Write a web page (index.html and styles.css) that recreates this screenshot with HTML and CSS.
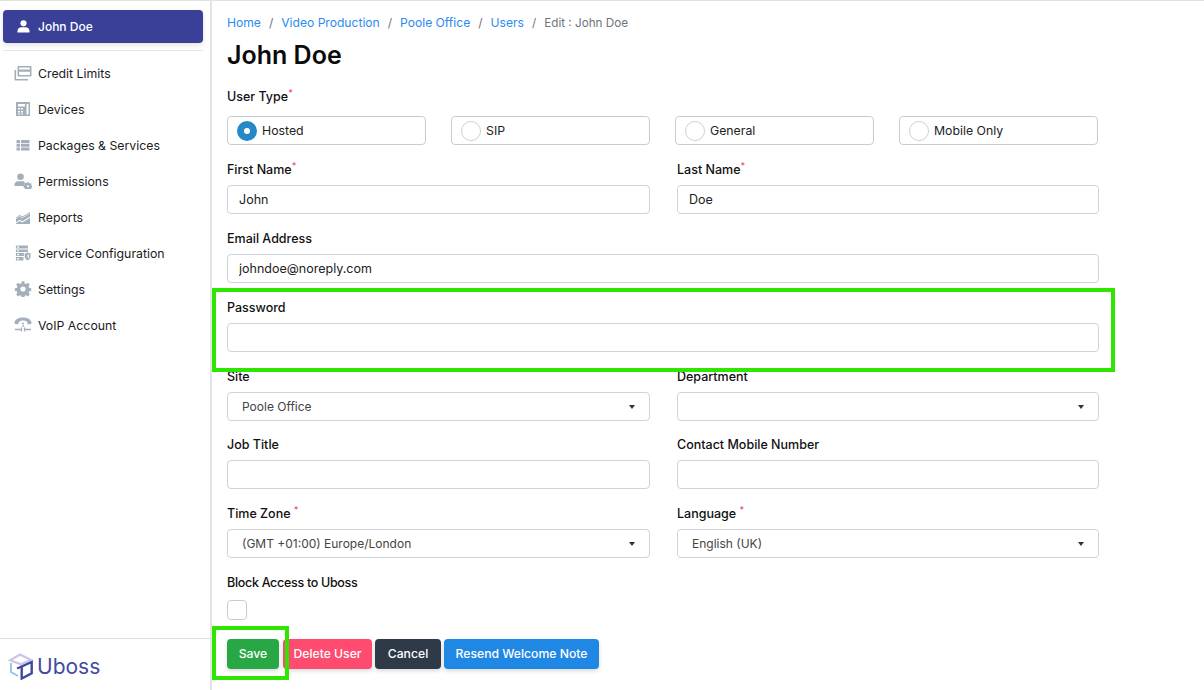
FILE: index.html
```html
<!DOCTYPE html>
<html lang="en">
<head>
    <meta charset="UTF-8">
    <meta name="viewport" content="width=device-width, initial-scale=1.0">
    <title>Edit User</title>
    <link rel="stylesheet" href="styles.css">
</head>
<body>

    <div class="app">
        <aside class="sidebar">
            <a class="user-link">
                <svg class="user-icon" viewBox="0 0 14 14"><circle cx="7" cy="3.6" r="3.3"/><path d="M0.5 13.5v-1.6c0-2.4 2-4 4.2-4h4.6c2.2 0 4.2 1.6 4.2 4v1.6z"/></svg>
                John Doe
            </a>
            <nav class="menu">
                <a class="menu-item">
                    <svg viewBox="0 0 18 16"><path fill-rule="evenodd" d="M4.500 1h12a1 1 0 0 1 1 1v8.500a1 1 0 0 1-1 1h-12a1 1 0 0 1-1-1V2a1 1 0 0 1 1-1zm.6 3.400h10.800V2.500H5.100zm0 2.400v3.200h10.800V6.800z"/><path d="M0.500 5v9.500a1 1 0 0 0 1 1H14v-1.600H2.100V5z"/></svg>
                    Credit Limits
                </a>
                <a class="menu-item">
                    <svg viewBox="0 0 18 16"><path fill-rule="evenodd" d="M2.500 1h13a.5.5 0 0 1 .5.500v13a.5.5 0 0 1-.5.500h-13a.5.5 0 0 1-.5-.5v-13a.5.5 0 0 1 .5-.5zM4 3v2.500h7V3zm0 4v1.500h2V7zm3 0v1.500h2V7zM4 10v1.500h2V10zm3 0v1.500h2V10zm-3 2.500v1h2v-1zm3 0v1h2v-1zM12.500 3v10.500h2V3z"/></svg>
                    Devices
                </a>
                <a class="menu-item">
                    <svg viewBox="0 0 18 16"><path d="M2.500 3h3.500v3H2.500zm4.500 0h8.500v3H7zM2.500 6.700h3.500v3H2.500zm4.500 0h8.500v3H7zM2.500 10.400h3.500v3H2.500zm4.500 0h8.500v3H7z"/></svg>
                    Packages &amp; Services
                </a>
                <a class="menu-item">
                    <svg viewBox="0 0 18 16"><circle cx="6.500" cy="3.700" r="3.300"/><path d="M0.500 13v-1.500c0-2 1.700-3.300 3.500-3.300h5c.6 0 1.100.1 1.600.3V13z"/><path fill-rule="evenodd" d="M13.200 9h1.600l.3 1 .9.400 1-.5 1 1-.5 1 .4.900 1 .3v1.600l-1 .3-.4.900.5 1-1 1-1-.5-.9.400-.3 1h-1.600l-.3-1-.9-.4-1 .5-1-1 .5-1-.4-.9-1-.3V12.600l1-.3.4-.9-.5-1 1-1 1 .5.900-.4zM14 12.200a1.200 1.200 0 1 0 0 2.400 1.200 1.200 0 0 0 0-2.400z" transform="translate(1.400 1.200) scale(.9)"/></svg>
                    Permissions
                </a>
                <a class="menu-item">
                    <svg viewBox="0 0 18 16"><path d="M2 10l3.500-2.600 3 1.500L16 4.500v3l-7.500 4.700-3-1.500L2 13.500V15h14V8.800l-7.500 4.700-3-1.500L2 14.500z"/><path d="M2 8.800l3.500-2.700 3 1.500L16 3v.9L8.500 8.500l-3-1.500L2 9.700z"/></svg>
                    Reports
                </a>
                <a class="menu-item">
                    <svg viewBox="0 0 18 18"><path d="M1 0.500h13.500v3.500H1zM1 5h13.500v3H1zM1 9h9v3.500H1zM1 13.500h8.500v4H1z"/><path d="M14.200 8.500l3.300 1.200v3c0 2.200-1.400 3.800-3.300 4.800-1.900-1-3.300-2.600-3.300-4.800v-3z"/><path fill="#fff" d="M14.200 10.500l1.500.6v1.700c0 1-.6 1.700-1.500 2.100z"/><path fill="#fff" d="M2.500 1.500h2V3h-2zM2.500 5.800h2V7h-2zM2.500 10h2v1.500h-2zM2.500 14.700h2v1.500h-2z"/></svg>
                    Service Configuration
                </a>
                <a class="menu-item">
                    <svg viewBox="0 0 18 16"><path fill-rule="evenodd" transform="translate(1 0)" d="M6.700.2h2.600l.4 2.200 1.300.6 1.900-1.200 1.900 1.900-1.200 1.900.6 1.300 2 .4v2.600l-2 .4-.6 1.300 1.200 1.900-1.900 1.900-1.900-1.200-1.300.6-.4 2.200H6.700l-.4-2.200-1.300-.6-1.900 1.200-1.900-1.900 1.200-1.900-.6-1.300-2-.4V7.300l2-.4.6-1.300L1.200 3.700l1.900-1.900L5 3l1.300-.6zM8 5.400a2.600 2.600 0 1 0 0 5.200 2.600 2.600 0 0 0 0-5.200z"/></svg>
                    Settings
                </a>
                <a class="menu-item">
                    <svg viewBox="0 0 20 18"><path d="M0.500 6C1.200 2.500 5 .500 10 .500s8.800 2 9.500 5.500v1.500l-4 .8-1-3C13.200 4.500 11.700 4 10 4s-3.200.5-4.500 1.300l-1 3-4-.8z"/><path d="M8.800 6.500h2.400v1.700H8.800zm.4 2.400h1.700v2H9.200z"/><path d="M1 13.300h6.500v-1.500H9v4.400H7.500v-1.300H1zm11.500-1.500H11v4.400h1.500v-1.300H19v-1.600h-6.500z"/></svg>
                    VoIP Account
                </a>
            </nav>
            <div class="sidebar-foot">
                <svg class="logo-icon" viewBox="0 0 26 27">
                    <path fill="none" stroke="#c9c6e6" stroke-width="2.200" d="M12 1.500l11 5.500-10 4.300L2 7.300z"/>
                    <path fill="none" stroke="#8fc4e6" stroke-width="1.800" d="M3 10v9l7 4"/>
                    <path fill="none" stroke="#3f4a9c" stroke-width="2.400" d="M13.700 13.500l10-4.500v11.200l-10 5.300z"/>
                    <path fill="none" stroke="#3f4a9c" stroke-width="2" d="M9 15.500l4.700-2"/>
                </svg>
                <span class="logo-text">Uboss</span>
            </div>
        </aside>

        <main class="content">
            <ol class="breadcrumb">
                <li><a>Home</a></li>
                <li><a>Video Production</a></li>
                <li><a>Poole Office</a></li>
                <li><a>Users</a></li>
                <li class="current">Edit : John Doe</li>
            </ol>
            <h1 class="title">John Doe</h1>

            <form class="user-form">
                <div class="field">
                    <label>User Type<sup>*</sup></label>
                    <div class="radio-row">
                        <div class="radio-box"><span class="radio checked"></span>Hosted</div>
                        <div class="radio-box"><span class="radio"></span>SIP</div>
                        <div class="radio-box"><span class="radio"></span>General</div>
                        <div class="radio-box"><span class="radio"></span>Mobile Only</div>
                    </div>
                </div>

                <div class="two-col">
                    <div class="field">
                        <label>First Name<sup>*</sup></label>
                        <input class="input" type="text" value="John">
                    </div>
                    <div class="field">
                        <label>Last Name<sup>*</sup></label>
                        <input class="input" type="text" value="Doe">
                    </div>
                </div>

                <div class="field">
                    <label>Email Address</label>
                    <input class="input" type="text" value="johndoe@noreply.com">
                </div>

                <div class="field">
                    <label>Password</label>
                    <input class="input" type="password">
                </div>

                <div class="two-col">
                    <div class="field">
                        <label>Site</label>
                        <div class="select">Poole Office</div>
                    </div>
                    <div class="field">
                        <label>Department</label>
                        <div class="select"></div>
                    </div>
                </div>

                <div class="two-col">
                    <div class="field">
                        <label>Job Title</label>
                        <input class="input" type="text">
                    </div>
                    <div class="field">
                        <label>Contact Mobile Number</label>
                        <input class="input" type="text">
                    </div>
                </div>

                <div class="two-col">
                    <div class="field">
                        <label>Time Zone <sup>*</sup></label>
                        <div class="select">(GMT +01:00) Europe/London</div>
                    </div>
                    <div class="field">
                        <label>Language <sup>*</sup></label>
                        <div class="select">English (UK)</div>
                    </div>
                </div>

                <div class="field">
                    <label class="block-label">Block Access to Uboss</label>
                    <span class="checkbox"></span>
                </div>

                <div class="actions">
                    <button type="button" class="btn btn-save">Save</button>
                    <button type="button" class="btn btn-delete">Delete User</button>
                    <button type="button" class="btn btn-cancel">Cancel</button>
                    <button type="button" class="btn btn-resend">Resend Welcome Note</button>
                </div>
            </form>
        </main>
    </div>

    <!-- green annotation boxes drawn over the form -->
    <div class="mark mark-password"></div>
    <div class="mark mark-save"></div>

</body>
</html>
```

FILE: styles.css
```css
* {
    box-sizing: border-box;
}
html, body {
    height: 100%;
}
body {
    margin: 0;
    font-family: Inter, "Liberation Sans", sans-serif;
    font-size: 12.3px;
    color: #111;
    background-color: #fff;
    overflow: hidden;
}
.app {
    display: flex;
    height: 690px;
    border-top: 1px solid #e2e2e2;
}

/* sidebar */
.sidebar {
    width: 212px;
    flex-shrink: 0;
    display: flex;
    flex-direction: column;
    padding-top: 9px;
    border-right: 2px solid #e4e4e4;
}
.user-link {
    display: flex;
    align-items: center;
    gap: 8px;
    height: 33px;
    margin: 0 7px 0 3px;
    padding: 0 0 1px 14px;
    color: #fff;
    font-size: 12px;
    font-weight: 500;
    background-color: #3a3f97;
    border-radius: 4px;
    box-shadow: 0 2px 5px rgba(0, 0, 0, 0.12);
}
.user-icon {
    width: 13px;
    height: 13px;
    fill: #fff;
}
.menu {
    display: flex;
    flex-direction: column;
    margin: 7px 7px 0 3px;
    padding-top: 4px;
    border-top: 1px solid #e4e4e4;
}
.menu-item {
    display: flex;
    align-items: center;
    height: 36px;
    padding-left: 11px;
    gap: 6px;
    color: #1c1c1c;
}
.menu-item svg {
    width: 18px;
    height: 16px;
    fill: #a3afba;
    flex-shrink: 0;
}
.sidebar-foot {
    display: flex;
    align-items: center;
    gap: 3px;
    margin-top: auto;
    height: 52px;
    padding: 4px 0 0 8px;
    border-top: 1px solid #dedede;
}
.logo-icon {
    width: 26px;
    height: 27px;
}
.logo-text {
    font-size: 21px;
    color: #414b9e;
}

/* main */
.content {
    flex: 1;
    padding: 0 105px 0 15px;
}
.breadcrumb {
    display: flex;
    list-style: none;
    margin: 0;
    padding: 14px 0 0;
    font-size: 12.1px;
    line-height: 16px;
}
.breadcrumb li + li::before {
    content: "/";
    margin: 0 8px;
    color: #6c757d;
}
.breadcrumb a {
    color: #2a8bf2;
}
.breadcrumb .current {
    color: #6c757d;
    font-size: 11.7px;
}
.title {
    margin: 8px 0 0;
    font-size: 25px;
    line-height: 32px;
    font-weight: 600;
    color: #0a0a0a;
}
.user-form {
    display: flex;
    flex-direction: column;
    padding-top: 18px;
    gap: 16.75px;
}
.field {
    display: flex;
    flex-direction: column;
    min-width: 0;
}
.field label {
    height: 16px;
    line-height: 16px;
    margin-bottom: 7px;
    font-size: 12.5px;
    font-weight: 500;
}
.field .block-label {
    letter-spacing: -0.3px;
}
.field sup {
    color: #f0476f;
    font-size: 9px;
    line-height: 0;
}
.two-col {
    display: grid;
    grid-template-columns: 423px 422px;
    gap: 27px;
}
.radio-row {
    display: grid;
    grid-template-columns: repeat(4, 1fr);
    gap: 25.5px;
    width: 870.5px;
    margin-top: 4px;
    margin-bottom: 0.5px;
}
.radio-box {
    display: flex;
    align-items: center;
    gap: 5px;
    height: 29px;
    padding-left: 9px;
    border: 1px solid #c8ccd2;
    border-radius: 4px;
    color: #222;
}
.radio {
    width: 20px;
    height: 20px;
    border: 1px solid #cfcfcf;
    border-radius: 50%;
}
.radio.checked {
    border: 7px solid #2589c8;
}
.input, .select {
    height: 29px;
    width: 100%;
    border: 1px solid #ced4da;
    border-radius: 4px;
    background-color: #fff;
    color: #222;
    font-family: inherit;
    font-size: 12.5px;
}
.input {
    padding: 0 11px;
    outline: none;
}
.select {
    position: relative;
    display: flex;
    align-items: center;
    padding-left: 14px;
    color: #444;
    font-size: 12px;
}
.select::after {
    content: "";
    position: absolute;
    right: 14px;
    top: 12px;
    border-left: 3.5px solid transparent;
    border-right: 3.5px solid transparent;
    border-top: 4px solid #333;
}
.checkbox {
    display: block;
    width: 20px;
    height: 20px;
    margin-top: 2px;
    border: 1px solid #c8ccd2;
    border-radius: 4px;
}
.actions {
    display: flex;
    gap: 3px;
    margin-top: 2.5px;
}
.btn {
    height: 30px;
    padding: 0 0 2px;
    border: none;
    border-radius: 4px;
    color: #fff;
    font-family: inherit;
    font-size: 12.2px;
    font-weight: 500;
    box-shadow: 0 2px 4px rgba(0, 0, 0, 0.15);
}
.btn-save {
    width: 52px;
    margin-right: 1px;
    background-color: #28a745;
}
.btn-delete {
    width: 89px;
    background-color: #ff4b70;
}
.btn-cancel {
    width: 66px;
    background-color: #2e3a48;
}
.btn-resend {
    width: 155px;
    background-color: #1f88e5;
}

/* annotation boxes */
.mark {
    position: absolute;
    border: 4px solid #2ee600;
    pointer-events: none;
}
.mark-password {
    left: 212px;
    top: 288px;
    width: 903px;
    height: 84px;
}
.mark-save {
    left: 212px;
    top: 626px;
    width: 77px;
    height: 54px;
}
```
